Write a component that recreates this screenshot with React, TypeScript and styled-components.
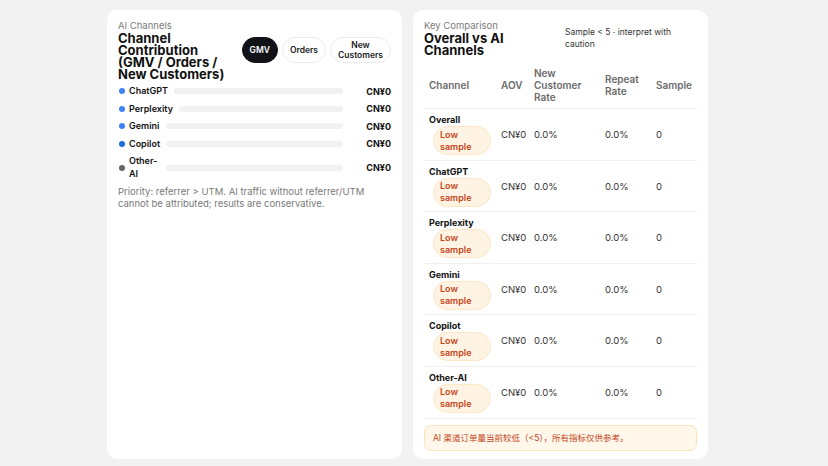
import * as React from 'react';
import styled, { createGlobalStyle } from 'styled-components';

const GlobalStyle = createGlobalStyle`
  html, body {
    margin: 0;
    padding: 0;
    background: #f2f2f2;
    font-family: Inter, "Noto Sans", "Noto Sans CJK SC", sans-serif;
    color: #111;
  }
`;

interface Channel {
  name: string;
  color: string;
}

const channels: Channel[] = [
  { name: 'ChatGPT', color: '#3b82f6' },
  { name: 'Perplexity', color: '#3b82f6' },
  { name: 'Gemini', color: '#3b82f6' },
  { name: 'Copilot', color: '#1a6fd6' },
  { name: 'Other-AI', color: '#666' }
];

const rows = ['Overall', 'ChatGPT', 'Perplexity', 'Gemini', 'Copilot', 'Other-AI'];

const Page = styled.div`
  display: grid;
  grid-template-columns: 295px 295px;
  gap: 11px;
  padding: 10px 0 7px 107px;
`;

const Card = styled.section`
  background: #fff;
  border-radius: 10px;
  padding: 10px 11px;
  box-sizing: border-box;
  height: 449px;
  display: flex;
  flex-direction: column;
`;

const Header = styled.div`
  display: flex;
  align-items: center;
  justify-content: space-between;
  gap: 8px;
`;

const TitleBlock = styled.div`
  min-width: 0;
  flex: 1 1 auto;
`;

const Label = styled.div`
  font-size: 9.5px;
  line-height: 12px;
  color: #7a7a7a;
`;

const Title = styled.h2`
  margin: 0;
  font-size: 13px;
  line-height: 12px;
  font-weight: 700;
  color: #111;
`;

const Toggle = styled.div`
  display: flex;
  gap: 4px;
`;

const ToggleButton = styled.button<{ $active?: boolean }>`
  font-family: inherit;
  font-size: 8.5px;
  line-height: 10px;
  font-weight: 600;
  padding: 2px 7px;
  min-height: 25px;
  border-radius: 13px;
  border: 1px solid ${p => (p.$active ? '#111318' : '#ececec')};
  background: ${p => (p.$active ? '#111318' : '#fff')};
  color: ${p => (p.$active ? '#fff' : '#222')};
`;

const BarList = styled.div`
  display: flex;
  flex-direction: column;
  gap: 5.3px;
  margin-top: 5px;
  padding-left: 1px;
`;

const BarRow = styled.div`
  display: flex;
  align-items: center;
  gap: 6px;
  min-height: 12px;
`;

const Dot = styled.span<{ $color: string }>`
  width: 6px;
  height: 6px;
  border-radius: 50%;
  background: ${p => p.$color};
  flex: 0 0 auto;
  margin-right: -2px;
`;

const ChannelName = styled.span`
  font-size: 9px;
  line-height: 12.3px;
  font-weight: 600;
  width: min-content;
  min-width: 31px;
  flex: 0 0 auto;
`;

const Track = styled.div`
  flex: 1 1 auto;
  height: 6px;
  border-radius: 3px;
  background: #f1f1f1;
`;

const Amount = styled.span`
  font-size: 9px;
  font-weight: 700;
  width: 42px;
  text-align: right;
  flex: 0 0 auto;
`;

const Note = styled.p`
  margin: 6px 0 0;
  font-size: 9.5px;
  line-height: 12px;
  color: #7a7a7a;
`;

const Caution = styled.div`
  font-size: 8.5px;
  line-height: 12px;
  color: #333;
  flex: 0 0 132px;
`;

const Table = styled.table`
  width: 273px;
  table-layout: fixed;
  border-collapse: collapse;
  margin-top: 6px;
`;

const Th = styled.th`
  text-align: left;
  font-size: 10px;
  line-height: 12px;
  font-weight: 600;
  color: #6b6b6b;
  padding: 5px 0 5px 5px;
  vertical-align: middle;
  border-bottom: 1px solid #efefef;
  height: 36px;
`;

const Td = styled.td`
  font-size: 9.5px;
  color: #333;
  padding: 5px 0 4.6px 5px;
  vertical-align: middle;
  border-bottom: 1px solid #efefef;
`;

const NameCell = styled.div`
  display: flex;
  flex-direction: column;
  padding-right: 5px;
`;

const RowName = styled.span`
  font-size: 9px;
  line-height: 12px;
  font-weight: 700;
  color: #111;
`;

const Badge = styled.span`
  margin-left: 4px;
  padding: 1.5px 6px;
  border-radius: 15px;
  background: #fff4e3;
  border: 1px solid #fde6c4;
  color: #c4451c;
  font-size: 9px;
  line-height: 12px;
  font-weight: 600;
`;

const Warning = styled.div`
  margin-top: 6px;
  padding: 6px 8px;
  border-radius: 7px;
  background: #fff7ea;
  border: 1px solid #fde3bd;
  color: #c4451c;
  font-size: 8.5px;
  line-height: 12px;
`;

export default function App() {
  return (
    <Page>
      <GlobalStyle />
      <Card>
        <Header>
          <TitleBlock>
            <Label>AI Channels</Label>
            <Title>Channel Contribution (GMV / Orders / New Customers)</Title>
          </TitleBlock>
          <Toggle>
            <ToggleButton $active>GMV</ToggleButton>
            <ToggleButton>Orders</ToggleButton>
            <ToggleButton>New Customers</ToggleButton>
          </Toggle>
        </Header>
        <BarList>
          {channels.map(c => (
            <BarRow key={c.name}>
              <Dot $color={c.color} />
              <ChannelName>{c.name}</ChannelName>
              <Track />
              <Amount>CN¥0</Amount>
            </BarRow>
          ))}
        </BarList>
        <Note>
          Priority: referrer &gt; UTM. AI traffic without referrer/UTM cannot be attributed; results are
          conservative.
        </Note>
      </Card>
      <Card>
        <Header>
          <TitleBlock>
            <Label>Key Comparison</Label>
            <Title>Overall vs AI Channels</Title>
          </TitleBlock>
          <Caution>Sample &lt; 5 · interpret with caution</Caution>
        </Header>
        <Table>
          <colgroup>
            <col style={{ width: 72 }} />
            <col style={{ width: 33 }} />
            <col style={{ width: 71 }} />
            <col style={{ width: 51 }} />
            <col style={{ width: 46 }} />
          </colgroup>
          <thead>
            <tr>
              <Th>Channel</Th>
              <Th>AOV</Th>
              <Th>New Customer Rate</Th>
              <Th>Repeat Rate</Th>
              <Th>Sample</Th>
            </tr>
          </thead>
          <tbody>
            {rows.map(r => (
              <tr key={r}>
                <Td>
                  <NameCell>
                    <RowName>{r}</RowName>
                    <Badge>Low sample</Badge>
                  </NameCell>
                </Td>
                <Td>CN¥0</Td>
                <Td>0.0%</Td>
                <Td>0.0%</Td>
                <Td>0</Td>
              </tr>
            ))}
          </tbody>
        </Table>
        <Warning>AI 渠道订单量当前较低（&lt;5），所有指标仅供参考。</Warning>
      </Card>
    </Page>
  );
}
